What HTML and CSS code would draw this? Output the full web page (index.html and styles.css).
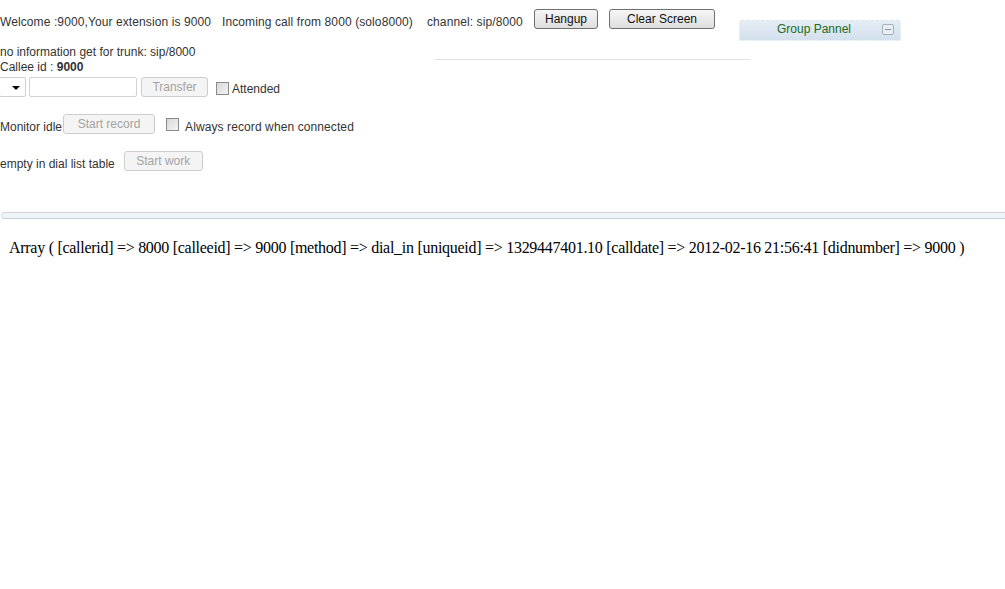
FILE: index.html
```html
<!DOCTYPE html>
<html lang="en">
<head>
    <meta charset="UTF-8">
    <title>Agent Panel</title>
    <link rel="stylesheet" href="styles.css">
</head>
<body>
    <div class="top-row">
        <div class="status-text">
            <span class="welcome">Welcome :9000,Your extension is 9000</span>
            <span class="incoming">Incoming call from 8000 (solo8000)</span>
            <span class="channel">channel: sip/8000</span>
        </div>
        <button class="btn btn-hangup">Hangup</button>
        <button class="btn btn-clear">Clear Screen</button>
        <div class="group-panel">
            <span class="group-title">Group Pannel</span>
            <span class="group-toggle"></span>
        </div>
    </div>

    <div class="trunk-row">
        <span class="line">no information get for trunk: sip/8000</span>
        <div class="panel-rule"></div>
    </div>
    <div class="line">Callee id : <b>9000</b></div>

    <div class="transfer-row">
        <div class="fake-select"><span class="arrow"></span></div>
        <input class="callee-input" type="text">
        <button class="btn btn-off btn-transfer" disabled>Transfer</button>
        <span class="check"></span>
        <span class="label">Attended</span>
    </div>

    <div class="monitor-row">
        <span class="label">Monitor idle</span>
        <button class="btn btn-off btn-record" disabled>Start record</button>
        <span class="check check-wide"></span>
        <span class="label always">Always record when connected</span>
    </div>

    <div class="dial-row">
        <span class="label">empty in dial list table</span>
        <button class="btn btn-off btn-work" disabled>Start work</button>
    </div>

    <div class="divider"></div>

    <div class="dump">Array ( [callerid] =&gt; 8000 [calleeid] =&gt; 9000 [method] =&gt; dial_in [uniqueid] =&gt; 1329447401.10 [calldate] =&gt; 2012-02-16 21:56:41 [didnumber] =&gt; 9000 )</div>
</body>
</html>
```

FILE: styles.css
```css
* {
    box-sizing: border-box;
}

body {
    margin: 0;
    font-family: 'Liberation Sans', Arial, sans-serif;
    font-size: 12px;
    color: #333;
    background: #fff;
    overflow: hidden;
}

.top-row {
    display: flex;
    align-items: flex-start;
    height: 41px;
}

.status-text {
    display: flex;
    margin-top: 15px;
    line-height: 14px;
    white-space: nowrap;
    letter-spacing: 0.1px;
}

.welcome {
    width: 222px;
}

.incoming {
    width: 205px;
}

.channel {
    width: 107px;
}

.btn {
    font-family: 'Liberation Sans', Arial, sans-serif;
    font-size: 12px;
    height: 20px;
    padding: 0;
    color: #111;
    border: 1px solid #707070;
    border-radius: 3px;
    background: linear-gradient(#f6f6f6, #dedede);
}

.btn-hangup {
    margin: 9px 0 0 0;
    width: 64px;
}

.btn-clear {
    margin: 9px 0 0 11px;
    width: 106px;
}

.btn-off {
    color: #a3a3a3;
    border-color: #cdcdcd;
    background: #f4f4f4;
}

.group-panel {
    margin: 20px 0 0 24px;
    width: 162px;
    height: 21px;
    padding: 0 12px 3px 0;
    display: flex;
    align-items: center;
    justify-content: center;
    position: relative;
    border: 1px dashed #eef3f8;
    background: linear-gradient(#e5edf5, #d3e0ec);
}

.group-title {
    color: #1d6b25;
}

.group-toggle {
    position: absolute;
    right: 6px;
    top: 3px;
    width: 12px;
    height: 11px;
    border: 1px solid #a9b2bb;
    border-radius: 2px;
    background: #e9eef3;
}

.group-toggle::after {
    content: '';
    position: absolute;
    left: 2px;
    right: 2px;
    top: 4px;
    height: 1px;
    background: #8c959e;
}

.trunk-row {
    display: flex;
    align-items: flex-end;
    margin-top: 4px;
}

.line {
    line-height: 15px;
    white-space: nowrap;
}

.panel-rule {
    margin-left: 240px;
    width: 315px;
    border-bottom: 1px solid #e2e2e2;
}

.transfer-row {
    display: flex;
    align-items: center;
    margin-top: 2px;
    height: 20px;
}

.fake-select {
    width: 27px;
    height: 20px;
    margin-left: -1px;
    border: 1px solid #cfcfcf;
    border-radius: 2px;
    position: relative;
}

.arrow {
    position: absolute;
    left: 12px;
    top: 8px;
    border-left: 4px solid transparent;
    border-right: 4px solid transparent;
    border-top: 4px solid #000;
}

.callee-input {
    margin-left: 3px;
    width: 108px;
    height: 20px;
    border: 1px solid #d3d3d3;
    border-radius: 2px;
    padding: 0 3px;
}

.btn-transfer {
    margin: -1px 0 0 4px;
    width: 67px;
}

.check {
    display: inline-block;
    width: 13px;
    height: 13px;
    margin: 2px 3px 0 8px;
    border: 1px solid #8a8a8a;
    background: linear-gradient(135deg, #d8d8d8, #f4f4f4);
}

.check-wide {
    margin: 0 6px 0 11px;
}

.label {
    line-height: 14px;
    white-space: nowrap;
}

.transfer-row .label {
    margin-top: 3px;
}

.monitor-row {
    display: flex;
    align-items: center;
    margin-top: 17px;
    height: 20px;
}

.monitor-row .label {
    margin-top: 6px;
}

.monitor-row .always {
    letter-spacing: 0.1px;
}

.btn-record {
    margin-left: 1px;
    width: 92px;
}

.dial-row {
    display: flex;
    align-items: center;
    margin-top: 17px;
    height: 20px;
}

.dial-row .label {
    margin-top: 5px;
}

.btn-work {
    margin-left: 9px;
    width: 79px;
}

.divider {
    margin: 41px -20px 0 1px;
    height: 7px;
    border-top: 1px solid #d5d5d5;
    border-bottom: 1px solid #c4d1dd;
    border-left: 1px solid #dde3e8;
    border-radius: 4px 0 0 4px;
    background: #eef4f9;
    box-shadow: 0 0 2px #f0f0f0;
}

.dump {
    margin: 20px 0 0 9px;
    font-family: 'Liberation Serif', 'Times New Roman', serif;
    font-size: 16px;
    line-height: 18px;
    letter-spacing: -0.28px;
    color: #000;
    white-space: nowrap;
}
```
